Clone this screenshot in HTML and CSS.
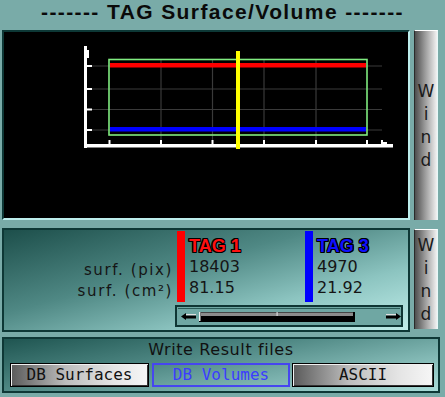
FILE: index.html
```html
<html>
  <head>
    <link rel="stylesheet" href="styles.css">
  </head>
  <body>
    <div id="app">
      <div class="title">------- TAG Surface/Volume -------</div>

      <div class="row top-row">
        <div class="plot">
          <svg width="404" height="186" viewBox="5 32 404 186">
            <g stroke="#3a3a3a" stroke-width="1.2">
              <line x1="92" y1="66" x2="383" y2="66" />
              <line x1="92" y1="89" x2="383" y2="89" />
              <line x1="92" y1="109.5" x2="383" y2="109.5" />
              <line x1="92" y1="130" x2="383" y2="130" />
              <line x1="162" y1="60" x2="162" y2="140" />
              <line x1="213.5" y1="60" x2="213.5" y2="140" />
              <line x1="265" y1="60" x2="265" y2="140" />
              <line x1="317" y1="60" x2="317" y2="140" />
            </g>
            <g fill="#fff">
              <rect x="85" y="46" width="3" height="102" />
              <rect x="88" y="50" width="2" height="8" />
              <rect x="88" y="65" width="5" height="2" />
              <rect x="88" y="88" width="5" height="2" />
              <rect x="88" y="108.5" width="5" height="2" />
              <rect x="88" y="129" width="5" height="2" />
              <rect x="85" y="144" width="309" height="3.5" />
              <rect x="109.5" y="140" width="2" height="4" />
              <rect x="161" y="140" width="2" height="4" />
              <rect x="212.5" y="140" width="2" height="4" />
              <rect x="264" y="140" width="2" height="4" />
              <rect x="316" y="140" width="2" height="4" />
              <rect x="367" y="140" width="2" height="4" />
              <rect x="382" y="140" width="2" height="4" />
              <rect x="384" y="142" width="4" height="2" />
            </g>
            <rect x="110" y="59.5" width="258" height="75.5" fill="none" stroke="#80ec80" stroke-width="1.6" />
            <rect x="111" y="63" width="256" height="4.5" fill="#ff0000" />
            <rect x="111" y="127" width="256" height="4.5" fill="#0000ff" />
            <rect x="237" y="51" width="4" height="98" fill="#ffff00" />
          </svg>
        </div>
        <div class="wind tall"><span>W</span><span>i</span><span>n</span><span>d</span></div>
      </div>

      <div class="row mid-row">
        <div class="stats">
          <div class="stats-data">
            <div class="labels">
              <div class="cell">surf. (pix)</div>
              <div class="cell">surf. (cm²)</div>
            </div>
            <div class="tag tag-red">
              <div class="tag-name">TAG 1</div>
              <div class="cell">18403</div>
              <div class="cell">81.15</div>
            </div>
            <div class="tag tag-blue">
              <div class="tag-name">TAG 3</div>
              <div class="cell">4970</div>
              <div class="cell">21.92</div>
            </div>
          </div>
          <div class="slider">
            <svg width="228" height="22" viewBox="175 305 228 22">
              <rect x="175" y="305" width="228" height="22" fill="#0f3634" />
              <rect x="177" y="307" width="224" height="18" fill="#6fa7a3" />
              <rect x="178" y="308" width="222" height="1" fill="#2a5c58" />
              <polygon points="181,316.5 186,313 186,315.5 196,315.5 196,318.5 186,318.5 186,320" fill="#000" />
              <rect x="186" y="314" width="10" height="1.2" fill="#e0e0e0" />
              <rect x="199" y="312" width="156" height="10" fill="#000" />
              <rect x="201" y="312.5" width="152" height="3.5" fill="#8c8c8c" />
              <rect x="199" y="312" width="1.5" height="9" fill="#f0f0f0" />
              <rect x="276.5" y="312" width="1.2" height="4" fill="#d8d8d8" />
              <polygon points="401,316.5 396,313 396,315.5 386,315.5 386,318.5 396,318.5 396,320" fill="#000" />
              <rect x="386" y="314" width="10" height="1.2" fill="#e0e0e0" />
            </svg>
          </div>
        </div>
        <div class="wind short"><span>W</span><span>i</span><span>n</span><span>d</span></div>
      </div>

      <div class="files">
        <div class="files-title">Write Result files</div>
        <div class="buttons">
          <button class="btn btn-surf">DB Surfaces</button>
          <button class="btn btn-vol">DB Volumes</button>
          <button class="btn btn-ascii">ASCII</button>
        </div>
      </div>
    </div>
  </body>
</html>
```

FILE: styles.css
```css
body {
  margin: 0;
  background: #79aba8;
  font-family: "DejaVu Sans", sans-serif;
}
#app {
  width: 445px;
  height: 397px;
  overflow: hidden;
}
.title {
  height: 28px;
  line-height: 24px;
  text-align: center;
  font-family: "Liberation Sans", Arial, sans-serif;
  font-weight: bold;
  font-size: 21px;
  letter-spacing: 1.4px;
  color: #0a0a0a;
}
.row {
  display: flex;
  padding-left: 2px;
  gap: 4px;
}
.top-row {
  margin-top: 2px;
}
.plot {
  width: 404px;
  height: 186px;
  background: #000;
  border-top: 2px solid #0d3836;
  border-left: 2px solid #0d3836;
  border-right: 2px solid #bdeeec;
  border-bottom: 2px solid #bdeeec;
}
.plot svg {
  display: block;
}
.wind {
  width: 24px;
  box-sizing: border-box;
  display: flex;
  flex-direction: column;
  align-items: center;
  justify-content: center;
  background: linear-gradient(to right, #4e4e4e, #9a9a9a 45%, #f2f2f2);
  border-top: 1px solid #fff;
  border-left: 1px solid #2a2a2a;
  border-right: 1px solid #e8f8f8;
  font-size: 17px;
  line-height: 23px;
  color: #1a1a1a;
}
.wind.tall {
  height: 190px;
}
.wind.short {
  height: 100px;
  margin-top: 1px;
}
.mid-row {
  margin-top: 8px;
}
.stats {
  width: 404px;
  height: 99px;
  border: 2px solid #0e3836;
  background: linear-gradient(165deg, #1d4f4b 0%, #4f8884 40%, #8cc4c0 70%, #c0eeea 100%);
  padding-top: 1px;
}
.stats-data {
  display: flex;
  height: 71px;
}
.labels {
  width: 169px;
  padding-top: 29px;
  text-align: right;
  font-size: 15px;
  letter-spacing: 1.6px;
  color: #151515;
}
.labels .cell {
  height: 21px;
  line-height: 21px;
}
.tag {
  padding-left: 4px;
  border-left: 8px solid;
  font-size: 16px;
  color: #151515;
}
.tag-red {
  margin-left: 4px;
  width: 116px;
  border-color: #ff0000;
}
.tag-blue {
  border-color: #0000ff;
}
.tag-name {
  height: 24px;
  padding-top: 4px;
  box-sizing: border-box;
  line-height: 22px;
  font-family: "Liberation Sans", Arial, sans-serif;
  font-weight: bold;
  font-size: 18px;
  text-shadow: 1px 0 #000, -1px 0 #000, 0 1px #000, 0 -1px #000, 1px 1px #000, -1px -1px #000, 1px -1px #000, -1px 1px #000;
}
.tag-red .tag-name {
  color: #ff1010;
}
.tag-blue .tag-name {
  color: #1010ff;
}
.tag .cell {
  height: 21px;
  line-height: 23px;
}
.slider {
  margin: 3px 0 0 171px;
  height: 22px;
}
.slider svg {
  display: block;
}
.files {
  margin: 5px 0 0 2px;
  width: 434px;
  height: 52px;
  border: 2px solid #0e3836;
  background: linear-gradient(170deg, #1f5551 0%, #4f8884 40%, #86bcb8 75%, #a8dcd8 100%);
}
.files-title {
  height: 24px;
  line-height: 22px;
  text-align: center;
  font-size: 16px;
  letter-spacing: 0.6px;
  color: #111;
}
.buttons {
  display: flex;
  padding-left: 6px;
  gap: 3px;
}
.btn {
  height: 24px;
  margin: 0;
  padding: 0;
  box-sizing: border-box;
  font-family: "DejaVu Sans Mono", monospace;
  font-size: 16px;
  line-height: 20px;
  color: #111;
  border: 1px solid #000;
  background: linear-gradient(to right, #5a5a5a, #bdbdbd 40%, #e4e4e4 75%, #f6f6f6);
  box-shadow: inset 1px 1px 0 #f0f0f0, inset -1px -1px 0 #333;
}
.btn-surf {
  width: 139px;
}
.btn-vol {
  width: 138px;
  background: none;
  border: 2px solid #4646f0;
  box-shadow: none;
  color: #3c3cff;
}
.btn-ascii {
  width: 142px;
  margin-left: -1px;
}
```
